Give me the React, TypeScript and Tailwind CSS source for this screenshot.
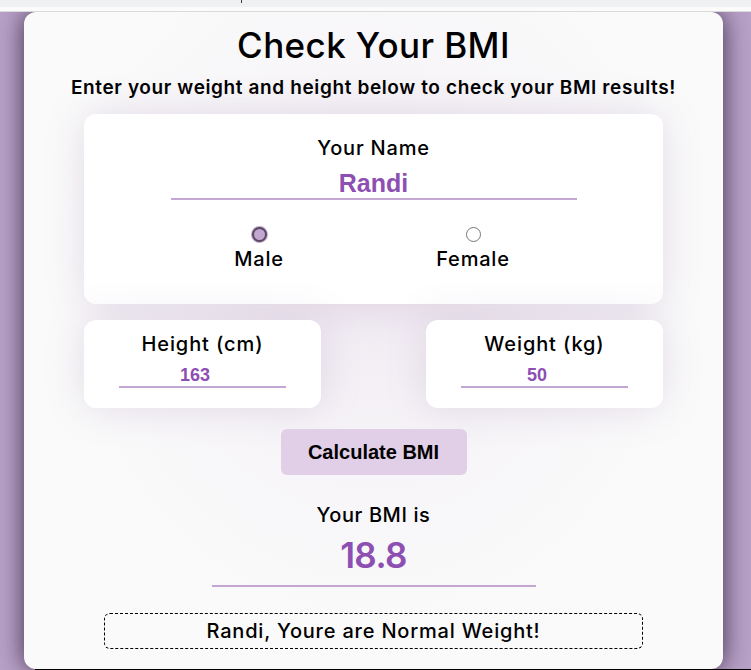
import { useState } from 'react'

const sans = "font-['Inter','Noto_Sans',sans-serif]"
const arial = "font-['Liberation_Sans',Arial,sans-serif]"

export default function App() {
  const [name, setName] = useState('Randi')
  const [gender, setGender] = useState('male')
  const [height, setHeight] = useState('163')
  const [weight, setWeight] = useState('50')

  return (
    <div className={`flex min-h-[670px] flex-col bg-[#b9a2c8] ${sans}`}>
      {/* browser strip */}
      <div className="relative z-10">
        <div className="relative h-[7px] bg-[#eff0f2]">
          <span className="absolute left-[241px] top-0 h-[3px] w-px bg-[#4a3a2a]" />
        </div>
        <div className="h-[4px] bg-[#fbfbfb]" />
        <div className="h-px bg-[#dadada]" />
      </div>

      <div className="flex flex-1 pl-[24px]">
        <main className="flex h-[657px] w-[699px] flex-col items-center rounded-[12px] bg-[#fafafa] bg-[radial-gradient(ellipse_at_50%_40%,#efe9f1_0%,#f7f5f8_35%,#fafafa_65%)] px-[60px] pt-[13px] text-black shadow-[0_0_26px_rgba(40,25,50,0.85)]">
          <h1 className="text-[35px] font-medium leading-[40px] tracking-[0.4px]">Check Your BMI</h1>
          <p className="mt-[11px] whitespace-nowrap text-[19px] font-semibold leading-[24px] tracking-[0.62px]">
            Enter your weight and height below to check your BMI results!
          </p>

          <section className="mt-[14px] flex w-full flex-col items-center rounded-[12px] bg-white pb-[33px] pt-[20px] shadow-[0_0_40px_rgba(140,105,160,0.2)]">
            <label className="text-[20px] font-medium leading-[28px] tracking-[0.8px]">Your Name</label>
            <input
              value={name}
              onChange={(e) => setName(e.target.value)}
              className={`mt-[6px] h-[32px] w-[406px] border-b-2 border-[#c3a6d2] bg-transparent text-center text-[25px] font-bold leading-[30px] text-[#8e4fb3] outline-none ${arial}`}
            />
            <div className="mt-[27px] flex w-full">
              {[
                { id: 'male', label: 'Male', cls: 'ml-[115px]' },
                { id: 'female', label: 'Female', cls: 'ml-[94px]' },
              ].map((g) => (
                <button
                  key={g.id}
                  onClick={() => setGender(g.id)}
                  className={`flex w-[120px] flex-col items-center ${g.cls}`}
                >
                  <span
                    className={
                      gender === g.id
                        ? 'h-[15px] w-[15px] rounded-full border-2 border-[#5a4a60] bg-[#c3a6d2] shadow-[0_0_0_1px_#c3a6d2]'
                        : 'h-[15px] w-[15px] rounded-full border border-[#767676] bg-white'
                    }
                  />
                  <span className="mt-[5px] text-[20px] font-medium leading-[24px] tracking-[0.8px]">{g.label}</span>
                </button>
              ))}
            </div>
          </section>

          <div className="mt-[16px] flex w-full justify-between">
            {[
              { label: 'Height (cm)', value: height, set: setHeight },
              { label: 'Weight (kg)', value: weight, set: setWeight },
            ].map((f) => (
              <div
                key={f.label}
                className="flex h-[88px] w-[237px] flex-col items-center rounded-[12px] bg-white pt-[10px] shadow-[0_0_40px_rgba(140,105,160,0.2)]"
              >
                <label className="text-[20px] font-medium leading-[28px] tracking-[0.9px]">{f.label}</label>
                <input
                  value={f.value}
                  onChange={(e) => f.set(e.target.value)}
                  className={`mt-[6px] h-[24px] w-[167px] border-b-2 border-[#c3a6d2] bg-transparent pr-[15px] text-center text-[18px] font-bold leading-[22px] text-[#8e4fb3] outline-none ${arial}`}
                />
              </div>
            ))}
          </div>

          <button
            className={`mt-[21px] h-[46px] w-[186px] rounded-[6px] bg-[#e0cfe6] text-[20px] font-bold text-black ${arial}`}
          >
            Calculate BMI
          </button>

          <p className="mt-[26px] text-[20px] font-medium leading-[28px] tracking-[0.6px]">Your BMI is</p>
          <div className="mt-[4px] w-[324px] border-b-2 border-[#c3a6d2] pb-[8px] text-center text-[35px] font-semibold leading-[44px] tracking-[-0.6px] text-[#8e4fb3]">
            18.8
          </div>

          <div className="mt-[26px] flex h-[36px] w-[539px] items-center justify-center rounded-[6px] border border-dashed border-black text-[20px] font-medium tracking-[0.8px]">
            {name}, Youre are Normal Weight!
          </div>
        </main>
      </div>
      <div className="ml-[35px] h-px bg-black" />
    </div>
  )
}
